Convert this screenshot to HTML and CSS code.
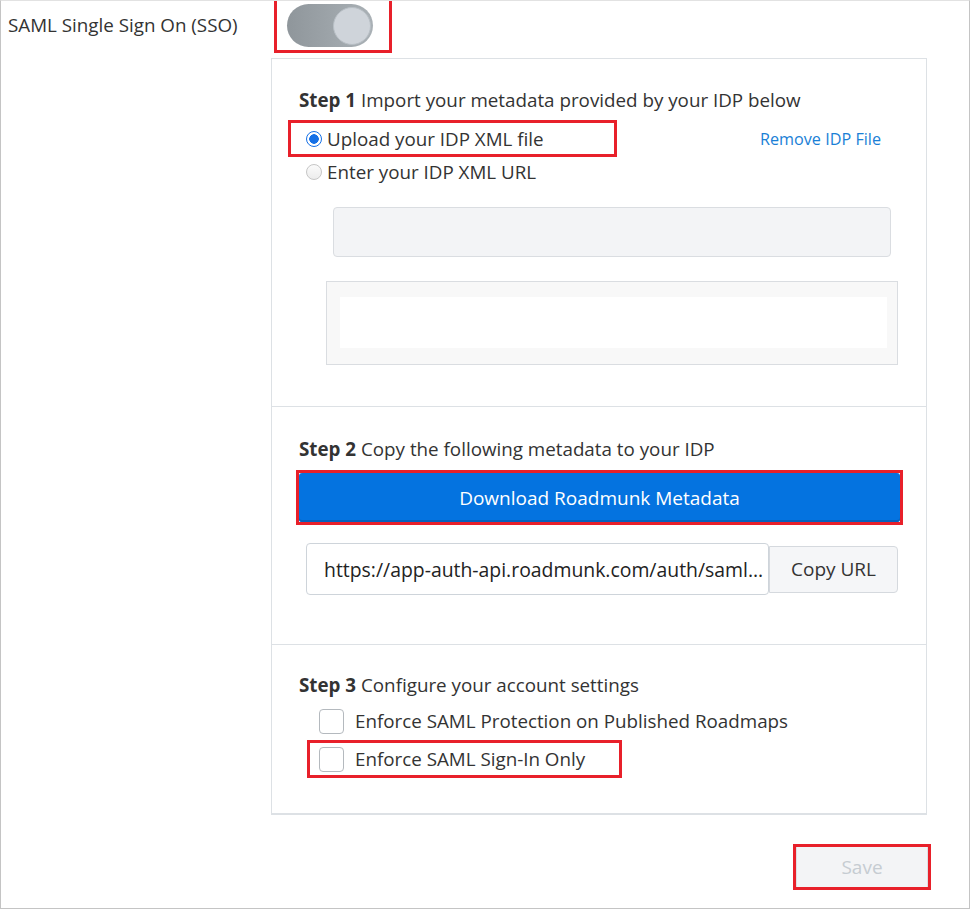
FILE: index.html
```html
<!DOCTYPE html>
<html lang="en">
<head>
<meta charset="utf-8">
<title>SAML Single Sign On</title>
<link rel="stylesheet" href="styles.css">
</head>
<body>
<div class="frame">
  <div class="top-row">
    <div class="sso-label">SAML Single Sign On (SSO)</div>
    <div class="toggle-wrap hl">
      <div class="toggle-track"><div class="toggle-knob"></div></div>
    </div>
  </div>

  <div class="card">
    <section class="step step-1">
      <p class="step-title"><b>Step 1</b> Import your metadata provided by your IDP below</p>
      <div class="radio-line">
        <label class="radio-row radio-row-hl hl"><span class="radio checked"></span><span>Upload your IDP XML file</span></label>
        <a class="remove-link">Remove IDP File</a>
      </div>
      <label class="radio-row radio-row-2"><span class="radio"></span><span>Enter your IDP XML URL</span></label>
      <div class="url-field-disabled"></div>
      <div class="file-box"><div class="file-box-inner"></div></div>
    </section>

    <section class="step step-2">
      <p class="step-title"><b>Step 2</b> Copy the following metadata to your IDP</p>
      <div class="download-wrap hl">
        <button class="download-btn">Download Roadmunk Metadata</button>
      </div>
      <div class="copy-row">
        <div class="copy-input">https://app-auth-api.roadmunk.com/auth/saml...</div>
        <button class="copy-btn">Copy URL</button>
      </div>
    </section>

    <section class="step step-3">
      <p class="step-title"><b>Step 3</b> Configure your account settings</p>
      <label class="check-row"><span class="checkbox"></span><span>Enforce SAML Protection on Published Roadmaps</span></label>
      <label class="check-row check-row-hl hl"><span class="checkbox"></span><span>Enforce SAML Sign-In Only</span></label>
    </section>
  </div>

  <div class="save-row">
    <button class="save-btn hl">Save</button>
  </div>
</div>
</body>
</html>
```

FILE: styles.css
```css
* { box-sizing: border-box; }

html, body {
  margin: 0;
  padding: 0;
  background: #ffffff;
}

body {
  font-family: "Open Sans", "Noto Sans", "Liberation Sans", sans-serif;
  color: #333333;
  font-size: 18.8px;
}

.frame {
  width: 970px;
  height: 909px;
  border: 1px solid #c4c4c4;
  border-top-color: #e2e2e2;
  overflow: hidden;
  display: flex;
  flex-direction: column;
}

.hl {
  outline: 3px solid #e8202a;
  outline-offset: 0;
}

/* top row */
.top-row {
  display: flex;
  height: 57px;
  align-items: flex-start;
}

.sso-label {
  width: 273px;
  padding-left: 7px;
  padding-top: 12px;
  line-height: 24px;
  font-size: 18.8px;
  color: #333;
}

.toggle-wrap {
  outline: none;
  border: 3px solid #e8202a;
  width: 118px;
  height: 56px;
  margin-top: -4px;
  padding: 4px 0 0 10px;
}

.toggle-track {
  width: 86px;
  height: 43px;
  border-radius: 22px;
  background: linear-gradient(to right, #8f969b, #aab1b6);
  display: flex;
  align-items: center;
  justify-content: flex-end;
  padding-right: 2px;
}

.toggle-knob {
  width: 38px;
  height: 38px;
  border-radius: 50%;
  background: #cfd4da;
  border: 1px solid #b8bfc5;
}

/* card */
.card {
  margin-left: 270px;
  width: 656px;
  border: 1px solid #dde1e5;
  border-bottom-width: 2px;
}

.step {
  padding: 28px 26px 0 27px;
}

.step + .step {
  border-top: 1px solid #dde1e5;
}

.step-1 { padding-top: 29px; padding-bottom: 41px; }
.step-2 { padding-top: 30px; padding-bottom: 49px; }
.step-3 { padding-bottom: 38px; }

.step-title {
  margin: 0;
  font-size: 18.8px;
  line-height: 24px;
  color: #333;
}

.step-title b {
  font-weight: 700;
}

/* radios */
.radio-line {
  display: flex;
  align-items: center;
  justify-content: space-between;
  margin-top: 11px;
}

.radio-row {
  display: flex;
  align-items: center;
  gap: 5px;
  font-size: 18.8px;
  color: #333;
}

.radio-row-hl {
  margin-left: -8px;
  padding-left: 15px;
  width: 323px;
  height: 31px;
}

.radio-row-2 {
  margin-top: 6px;
  padding-left: 7px;
  height: 24px;
}

.radio {
  width: 16px;
  height: 16px;
  border-radius: 50%;
  border: 1px solid #c6c6c6;
  background: linear-gradient(#fbfbfb, #ececec);
  flex: none;
}

.radio.checked {
  border: 1px solid #1570e6;
  background: radial-gradient(circle, #1570e6 0 4.5px, #ffffff 5px);
}

.remove-link {
  font-size: 16.2px;
  color: #1a7fd6;
  margin-right: 19px;
  cursor: pointer;
}

.url-field-disabled {
  margin-top: 23px;
  margin-left: 34px;
  width: 558px;
  height: 50px;
  background: #f3f4f6;
  border: 1px solid #dadde1;
  border-radius: 4px;
}

.file-box {
  margin-top: 24px;
  margin-left: 27px;
  width: 572px;
  height: 84px;
  background: #f8f8f8;
  border: 1px solid #dadde1;
  padding: 15px 0 0 13px;
}

.file-box-inner {
  width: 547px;
  height: 51px;
  background: #ffffff;
}

/* step 2 */
.download-wrap {
  margin-top: 12px;
  width: 601px;
  height: 49px;
}

.download-btn {
  display: block;
  width: 100%;
  height: 100%;
  border: none;
  border-radius: 3px;
  background: #0473e0;
  color: #ffffff;
  font-family: inherit;
  font-size: 19px;
  box-shadow: inset 0 -2px 0 #0462bf;
}

.copy-row {
  display: flex;
  align-items: center;
  margin-top: 21px;
  margin-left: 7px;
}

.copy-input {
  width: 463px;
  height: 52px;
  border: 1px solid #ced4da;
  border-radius: 4px;
  padding-left: 17px;
  display: flex;
  align-items: center;
  font-size: 19.4px;
  color: #222;
  white-space: nowrap;
  overflow: hidden;
}

.copy-btn {
  width: 129px;
  height: 47px;
  background: #f5f6f8;
  border: 1px solid #d5d9de;
  border-radius: 0 4px 4px 0;
  font-family: inherit;
  font-size: 19px;
  color: #333;
}

/* step 3 */
.check-row {
  display: flex;
  align-items: center;
  gap: 11px;
  font-size: 18.8px;
  color: #333;
  margin-top: 11px;
  margin-left: 20px;
}

.check-row-hl {
  margin-top: 9px;
  margin-left: 11px;
  padding: 3px 0 3px 9px;
  width: 309px;
}

.checkbox {
  width: 25px;
  height: 25px;
  border: 1px solid #b4b9be;
  border-radius: 4px;
  background: #ffffff;
  flex: none;
}

/* save */
.save-row {
  display: flex;
  justify-content: flex-end;
  margin-top: 32px;
  padding-right: 41px;
}

.save-btn {
  width: 132px;
  height: 40px;
  background: #f3f4f6;
  border: none;
  border-left: 1px solid #dcdfe3;
  border-right: 1px solid #dcdfe3;
  font-family: inherit;
  font-size: 19px;
  color: #c6ccd2;
}
```
